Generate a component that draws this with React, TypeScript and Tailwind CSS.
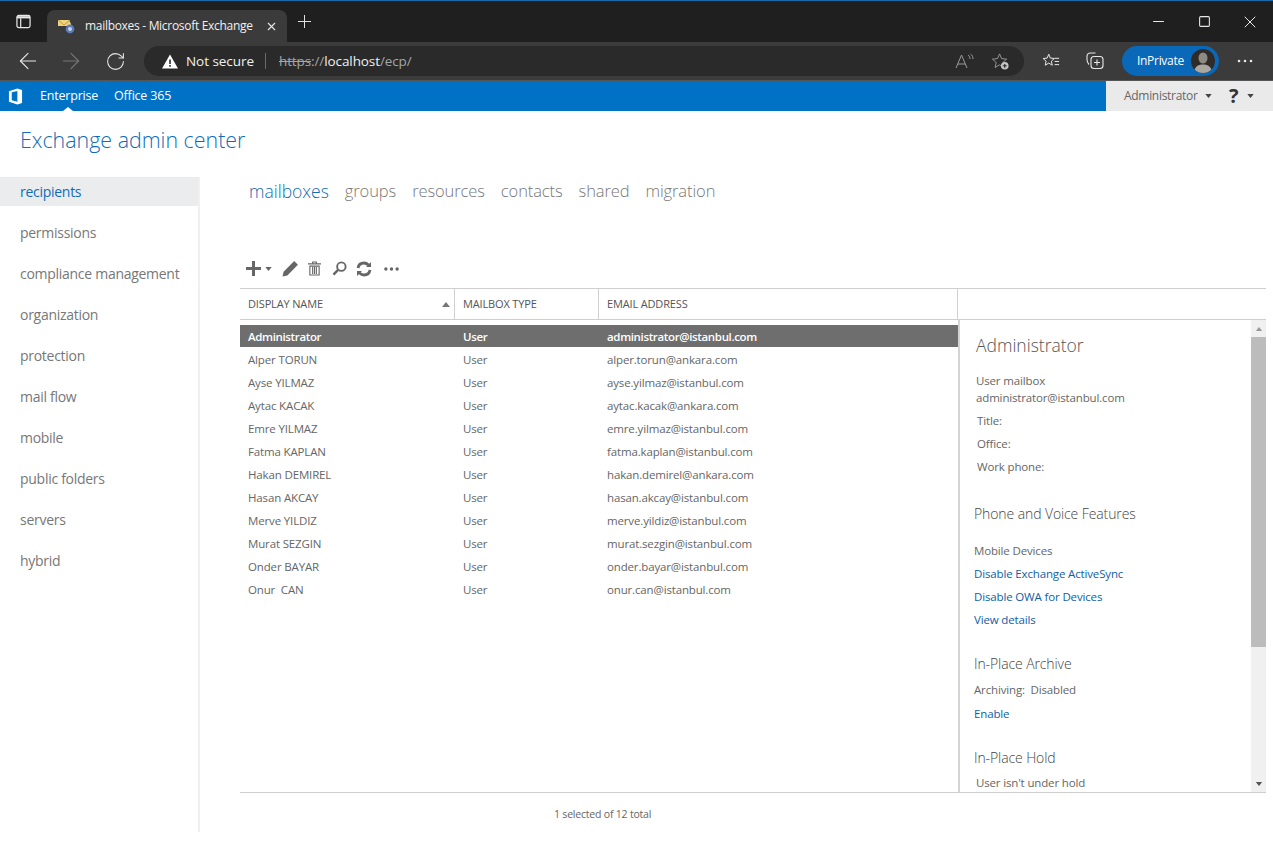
import { ArrowLeft, ArrowRight, RotateCw, Minus, Square, X, Plus } from "lucide-react";

const navItems = [
  "recipients",
  "permissions",
  "compliance management",
  "organization",
  "protection",
  "mail flow",
  "mobile",
  "public folders",
  "servers",
  "hybrid",
];

const tabs = ["groups", "resources", "contacts", "shared", "migration"];

const mailboxes = [
  ["Alper TORUN", "alper.torun@ankara.com"],
  ["Ayse YILMAZ", "ayse.yilmaz@istanbul.com"],
  ["Aytac KACAK", "aytac.kacak@ankara.com"],
  ["Emre YILMAZ", "emre.yilmaz@istanbul.com"],
  ["Fatma KAPLAN", "fatma.kaplan@istanbul.com"],
  ["Hakan DEMIREL", "hakan.demirel@ankara.com"],
  ["Hasan AKCAY", "hasan.akcay@istanbul.com"],
  ["Merve YILDIZ", "merve.yildiz@istanbul.com"],
  ["Murat SEZGIN", "murat.sezgin@istanbul.com"],
  ["Onder BAYAR", "onder.bayar@istanbul.com"],
  ["Onur  CAN", "onur.can@istanbul.com"],
];

function Caret({ className }: { className: string }) {
  return (
    <svg viewBox="0 0 8 5" className={className} fill="currentColor">
      <path d="M0 0h8L4 5z" />
    </svg>
  );
}

function BrowserChrome() {
  return (
    <div className="font-['Open_Sans',sans-serif]">
      <div className="h-px bg-[#1a6aa8]" />
      {/* tab strip */}
      <div className="flex h-[41px] items-end bg-[#1f1f1f] text-[#e8e8e8]">
        <div className="flex h-[41px] w-[47px] items-center justify-center">
          <svg viewBox="0 0 16 16" className="h-[15px] w-[15px]" fill="none" stroke="currentColor" strokeWidth="1.3">
            <rect x="1" y="1.5" width="14" height="13" rx="2" />
            <path d="M1 3.5h14" strokeWidth="2.4" />
            <path d="M5 4.5v10" />
          </svg>
        </div>
        <div className="flex h-[32px] w-[240px] items-center rounded-t-lg bg-[#3b3b3b] pl-[11px]">
          <svg viewBox="0 0 17 15" className="h-[15px] w-[17px]">
            <path d="M0 1h11l2 4v2H0z" fill="#efd27c" />
            <path d="M0 1l6 5 6-5" fill="none" stroke="#a98f3c" strokeWidth="0.8" />
            <circle cx="12" cy="10" r="4.4" fill="#5a7ab8" />
            <circle cx="12" cy="10" r="2" fill="#c7d4ea" />
          </svg>
          <span className="ml-[10px] whitespace-nowrap text-[12px] tracking-[-0.3px] text-[#f0f0f0]">mailboxes - Microsoft Exchange</span>
          <X className="ml-[12px] h-[13px] w-[13px]" strokeWidth={2} />
        </div>
        <div className="flex h-[41px] w-[34px] items-center justify-center">
          <Plus className="h-[21px] w-[21px]" strokeWidth={1.1} />
        </div>
        <div className="ml-auto flex h-[41px] items-center">
          <div className="flex w-[46px] justify-center">
            <Minus className="h-[17px] w-[17px]" strokeWidth={1.5} />
          </div>
          <div className="flex w-[46px] justify-center">
            <Square className="h-[13px] w-[13px]" strokeWidth={2} />
          </div>
          <div className="flex w-[46px] justify-center">
            <X className="h-[20px] w-[20px]" strokeWidth={1.2} />
          </div>
        </div>
      </div>
      {/* address bar */}
      <div className="flex h-[39px] items-center border-b border-[#555] bg-[#3b3b3b] text-[#e8e8e8]">
        <div className="flex w-[144px] items-center pl-[15px]">
          <ArrowLeft className="h-[26px] w-[26px]" strokeWidth={1} />
          <ArrowRight className="ml-[17px] h-[26px] w-[26px] text-[#777]" strokeWidth={1} />
          <RotateCw className="ml-[21px] h-[21px] w-[21px]" strokeWidth={1.2} />
        </div>
        <div className="flex h-[30px] w-[880px] items-center rounded-full bg-[#2a2a2a] pl-[18px]">
          <svg viewBox="0 0 16 14" className="h-[15px] w-[16px]">
            <path d="M8 0l8 14H0z" fill="#fff" />
            <path d="M7.2 5h1.6v4.6H7.2zM7.2 10.6h1.6v1.6H7.2z" fill="#2a2a2a" />
          </svg>
          <span className="ml-[8px] text-[13.5px] tracking-[-0.05px] text-[#f0f0f0]">Not secure</span>
          <span className="ml-[11px] h-[16px] w-px bg-[#6a6a6a]" />
          <span className="ml-[13px] text-[13.5px] tracking-[-0.1px] text-[#a5a5a5]">
            <span className="line-through">https</span>://<span className="text-[#f0f0f0]">localhost</span>/ecp/
          </span>
          <div className="ml-auto flex items-center gap-[16px] pr-[14px] text-[#9a9a9a]">
            <svg viewBox="0 0 20 16" className="h-[16px] w-[20px]" fill="none" stroke="currentColor" strokeWidth="1">
              <path d="M1 15L6.5 2 12 15M3 11h7" />
              <path d="M13 2c1.5 1 2 2.500 2 4M15.500 1c1.800 1.300 2.500 3 2.500 5" />
            </svg>
            <svg viewBox="0 0 20 20" className="h-[19px] w-[19px]" fill="none" stroke="currentColor" strokeWidth="1">
              <path d="M9 2l2.200 5 5.300.5-4 3.500 1.200 5.300L9 13.500l-4.700 2.800L5.500 11l-4-3.500L6.800 7z" />
              <circle cx="14.500" cy="14.500" r="4" fill="#c4c4c4" stroke="none" />
              <path d="M12.500 14.500h4M14.500 12.500v4" stroke="#2a2a2a" strokeWidth="1.2" />
            </svg>
          </div>
        </div>
        <div className="ml-[18px] flex items-center">
          <svg viewBox="0 0 20 18" className="h-[18px] w-[18px]" fill="none" stroke="currentColor" strokeWidth="1.1">
            <path d="M7.500 1.500l1.800 4.300 4.500.4-3.400 3 1 4.500-3.900-2.400-3.900 2.400 1-4.500-3.400-3 4.500-.4z" />
            <path d="M14 6h5M14 9.500h5M14 13h5" />
          </svg>
          <svg viewBox="0 0 18 18" className="ml-[26px] h-[18px] w-[18px]" fill="none" stroke="currentColor" strokeWidth="1.1">
            <path d="M3 12.500C1.500 11 1 9.500 1 7.500V4.500C1 2.500 2.500 1 4.500 1H9.500" />
            <rect x="5" y="4.500" width="12" height="12" rx="3" />
            <path d="M11 7.500v6M8 10.500h6" />
          </svg>
          <div className="ml-[18px] flex h-[30px] w-[97px] items-center rounded-full bg-[#0a68b8] pl-[15px]">
            <span className="w-[55px] whitespace-nowrap text-[12px] tracking-[-0.3px] text-white">InPrivate</span>
            <svg viewBox="0 0 24 24" className="ml-[-1px] h-[24px] w-[24px]">
              <defs>
                <clipPath id="avatar">
                  <circle cx="12" cy="12" r="12" />
                </clipPath>
              </defs>
              <g clipPath="url(#avatar)">
                <rect width="24" height="24" fill="#2e2b28" />
                <ellipse cx="12" cy="9" rx="4.500" ry="5.500" fill="#8d8b84" />
                <path d="M3 24c0-6 4-8.500 9-8.500S21 18 21 24z" fill="#a9a7a0" />
              </g>
            </svg>
          </div>
          <svg viewBox="0 0 16 4" className="ml-[18px] h-[4px] w-[16px]" fill="currentColor">
            <circle cx="2" cy="2" r="1.300" />
            <circle cx="8" cy="2" r="1.300" />
            <circle cx="14" cy="2" r="1.300" />
          </svg>
        </div>
      </div>
    </div>
  );
}

function SuiteBar() {
  return (
    <div className="flex h-[30px] items-center bg-[#0072c6] text-[12.5px] tracking-[-0.2px] text-white">
      <svg viewBox="0 0 16 18" className="ml-[8px] h-[17px] w-[15px]" fill="#fff">
        <path d="M1 3.500L10 .5l5 1.500v14l-5 1.500-9-3zM10 3L4 4.500v8.500l6 1.500z" fillRule="evenodd" />
      </svg>
      <div className="relative ml-[17px] flex h-full items-center">
        Enterprise
        <span className="absolute bottom-0 left-[23px] h-0 w-0 border-x-[5px] border-b-[4px] border-x-transparent border-b-white" />
      </div>
      <span className="ml-[16px]">Office 365</span>
      <div className="ml-auto flex h-full w-[167px] items-center bg-[#eaeaea] pl-[18px] text-[#666]">
        <span className="w-[72px] whitespace-nowrap text-[12px] tracking-[-0.3px]">Administrator</span>
        <Caret className="ml-[9px] h-[4px] w-[7px] text-[#444]" />
        <span className="ml-[17px] text-[20px] font-bold leading-none text-[#333]">?</span>
        <Caret className="ml-[9px] h-[4px] w-[7px] text-[#444]" />
      </div>
    </div>
  );
}

function Toolbar() {
  return (
    <div className="flex h-[21px] items-center pl-[6px] text-[#666]">
      <svg viewBox="0 0 15 15" className="h-[15px] w-[15px]" fill="currentColor">
        <path d="M6 0h3v6h6v3H9v6H6V9H0V6h6z" />
      </svg>
      <Caret className="ml-[4px] h-[4px] w-[7px]" />
      <svg viewBox="0 0 16 16" className="ml-[10px] h-[17px] w-[17px]" fill="currentColor">
        <path d="M11.500 1L15 4.500 5 14.500 0.500 15.500 1.500 11z" />
      </svg>
      <svg viewBox="0 0 14 16" className="ml-[9px] h-[15px] w-[13px]" fill="none" stroke="currentColor" strokeWidth="1.2">
        <path d="M0 3h14M5 3V1h4v2M2 5.500h10V15H2z" />
        <path d="M5 6v8M7 6v8M9 6v8" />
      </svg>
      <svg viewBox="0 0 16 16" className="ml-[11px] h-[15px] w-[15px]" fill="none" stroke="currentColor">
        <circle cx="10" cy="6" r="4.500" strokeWidth="2" />
        <path d="M6.500 9.500L1.500 14.500" strokeWidth="2.600" />
      </svg>
      <svg viewBox="0 0 16 16" className="ml-[9px] h-[16px] w-[16px]" fill="none" stroke="currentColor" strokeWidth="2.800">
        <path d="M2 7c.5-3 3-5 6-5 2 0 3.500 1 4.500 2" />
        <path d="M14 9c-.5 3-3 5-6 5-2 0-3.500-1-4.500-2" />
        <path d="M15 1v5h-5zM1 15v-5h5z" fill="currentColor" stroke="none" />
      </svg>
      <svg viewBox="0 0 16 4" className="ml-[12px] h-[4px] w-[15px]" fill="currentColor">
        <circle cx="2" cy="2" r="1.800" />
        <circle cx="8" cy="2" r="1.800" />
        <circle cx="14" cy="2" r="1.800" />
      </svg>
    </div>
  );
}

function DetailsPane() {
  return (
    <div className="relative h-full flex-1 overflow-hidden border-l-2 border-[#d4d4d4] text-[11.5px] tracking-[-0.15px] text-[#666]">
      <div className="pl-[16px] leading-[18px]">
        <h3 className="mt-[12px] text-[17.5px] font-light leading-[26px] tracking-normal text-[#555]">Administrator</h3>
        <p className="mt-[14px]">User mailbox</p>
        <p className="mt-[-1px]">administrator@istanbul.com</p>
        <div className="mt-[5px] ml-px flex flex-col gap-[5px]">
          <p>Title:</p>
          <p>Office:</p>
          <p>Work phone:</p>
        </div>
        <h4 className="mt-[28px] -ml-[2px] text-[14px] font-light leading-[20px] tracking-[-0.1px] text-[#444]">Phone and Voice Features</h4>
        <p className="mt-[18px] -ml-[2px]">Mobile Devices</p>
        <div className="-ml-[2px] mt-[5px] flex flex-col gap-[5px] text-[#0f5ea8]">
          <p>Disable Exchange ActiveSync</p>
          <p>Disable OWA for Devices</p>
          <p>View details</p>
        </div>
        <h4 className="mt-[25px] -ml-[2px] text-[14px] font-light leading-[20px] tracking-[-0.1px] text-[#444]">In-Place Archive</h4>
        <p className="mt-[7px] -ml-[2px]">Archiving:&nbsp; Disabled</p>
        <p className="mt-[6px] -ml-[2px] text-[#0f5ea8]">Enable</p>
        <h4 className="mt-[25px] -ml-[2px] text-[14px] font-light leading-[20px] tracking-[-0.1px] text-[#444]">In-Place Hold</h4>
        <p className="mt-[6px]">User isn't under hold</p>
      </div>
      {/* scrollbar */}
      <div className="absolute inset-y-0 right-0 flex w-[15px] flex-col items-center bg-[#f0f0f0]">
        <div className="flex h-[17px] items-center justify-center">
          <Caret className="h-[4px] w-[8px] rotate-180 text-[#999]" />
        </div>
        <div className="h-[310px] w-full bg-[#bcbcbc]" />
        <div className="mt-auto flex h-[17px] items-center justify-center">
          <Caret className="h-[4px] w-[8px] text-[#555]" />
        </div>
      </div>
    </div>
  );
}

function MailboxTable() {
  return (
    <div className="w-[1026px] text-[11.5px] tracking-[-0.15px] text-[#666]">
      <div className="flex h-[32px] items-center border-y border-[#cfcfcf] text-[11px] text-[#555]">
        <div className="flex h-full w-[215px] items-center justify-between border-r border-[#cfcfcf] pl-[8px] pr-[4px]">
          DISPLAY NAME
          <Caret className="h-[5px] w-[8px] rotate-180 text-[#777]" />
        </div>
        <div className="flex h-full w-[144px] items-center border-r border-[#cfcfcf] pl-[8px]">MAILBOX TYPE</div>
        <div className="flex h-full w-[359px] items-center border-r border-[#cfcfcf] pl-[8px]">EMAIL ADDRESS</div>
      </div>
      <div className="flex h-[473px] border-b border-[#cfcfcf]">
        <div className="w-[718px] pt-[5px]">
          <div className="flex h-[22px] items-center bg-[#6e6e6e] pt-[2px] font-semibold tracking-[-0.35px] text-white">
            <span className="w-[215px] pl-[8px]">Administrator</span>
            <span className="w-[144px] pl-[8px]">User</span>
            <span className="pl-[8px]">administrator@istanbul.com</span>
          </div>
          <div className="pt-[1px]">
            {mailboxes.map(([name, email]) => (
              <div key={email} className="flex h-[23px] items-center">
                <span className="w-[215px] whitespace-pre pl-[8px]">{name}</span>
                <span className="w-[144px] pl-[8px]">User</span>
                <span className="pl-[8px]">{email}</span>
              </div>
            ))}
          </div>
        </div>
        <DetailsPane />
      </div>
      <p className="mt-[13px] pl-[314px] text-[10.5px] leading-[16px] tracking-[-0.2px]">1 selected of 12 total</p>
    </div>
  );
}

export default function App() {
  return (
    <div className="h-[847px] w-[1273px] overflow-hidden bg-white font-['Open_Sans',sans-serif]">
      <BrowserChrome />
      <SuiteBar />
      <div className="flex h-[66px] items-start pl-[20px] pt-[13px]">
        <h1 className="text-[21.4px] font-light leading-[32px] text-[#0f6cb8]">Exchange admin center</h1>
      </div>
      <div className="flex h-[655px]">
        <nav className="w-[200px] border-r-2 border-[#f0f0f0] text-[14px] tracking-[-0.28px] text-[#777]">
          {navItems.map((item, i) => (
            <div
              key={item}
              className={
                i === 0
                  ? "mb-[12px] flex h-[29px] items-center bg-[#eaecee] pl-[20px] text-[#0f6cb8]"
                  : "mb-[12px] flex h-[29px] items-center pl-[20px]"
              }
            >
              {item}
            </div>
          ))}
        </nav>
        <main className="flex-1 pl-[40px]">
          <div className="flex h-[81px] gap-[16px] pl-[9px] pt-[1px] text-[16.5px] font-light leading-[26px] tracking-[-0.1px] text-[#777]">
            <span className="text-[17.5px] tracking-normal text-[#0f6cb8]">mailboxes</span>
            {tabs.map((t) => (
              <span key={t}>{t}</span>
            ))}
          </div>
          <Toolbar />
          <div className="h-[9px]" />
          <MailboxTable />
        </main>
      </div>
    </div>
  );
}
